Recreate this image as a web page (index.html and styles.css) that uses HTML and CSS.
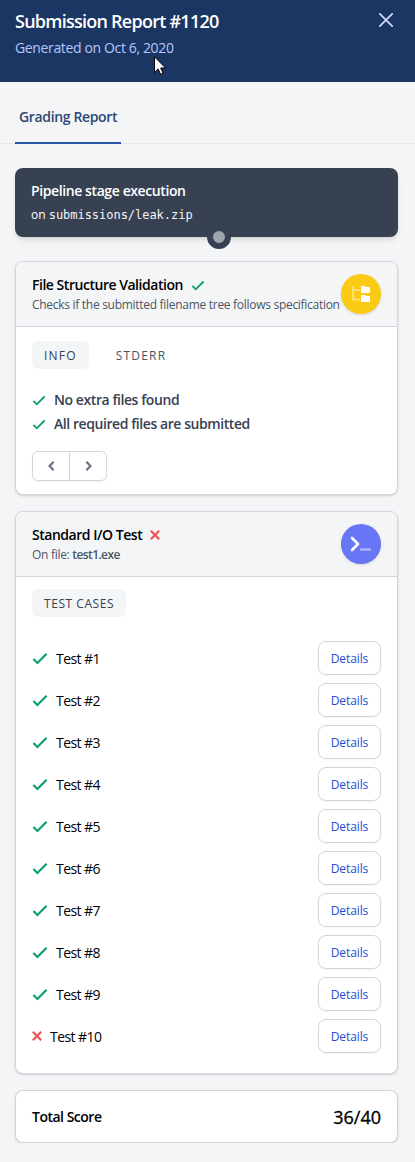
FILE: index.html
```html
<!DOCTYPE html>
<html lang="en">
<head>
<meta charset="utf-8">
<title>Submission Report #1120</title>
<link rel="stylesheet" href="styles.css">
</head>
<body>
<svg class="defs" width="0" height="0" aria-hidden="true">
  <symbol id="check" viewBox="0 0 16 13"><path d="M1.400 7l4 4L14.600 1.800" fill="none" stroke="currentColor" stroke-width="2.200"/></symbol>
  <symbol id="cross" viewBox="0 0 10 10"><path d="M.8.8l8.4 8.4M9.2.8L.8 9.2" fill="none" stroke="currentColor" stroke-width="2.200"/></symbol>
</svg>
<header class="header">
  <div>
    <h1 class="title"><span>Submission Report #1120</span></h1>
    <p class="generated"><span>Generated on Oct 6, 2020</span></p>
  </div>
  <svg class="close" viewBox="0 0 14 14"><path d="M.8.8l12.4 12.4M13.2.8L.8 13.2" fill="none" stroke="currentColor" stroke-width="1.8" stroke-linecap="round"/></svg>
  <svg class="cursor" viewBox="0 0 12 19"><path d="M.5.8v15.6l3.6-3.5 2.5 5.4 2.5-1.1-2.4-5.2h4.8z" fill="#fff" stroke="#000"/></svg>
</header>
<nav class="tabs"><a class="tab">Grading Report</a></nav>
<main class="content">
  <section class="stage">
    <h2 class="stage-title">Pipeline stage execution</h2>
    <p class="stage-file">on <code>submissions/leak.zip</code></p>
    <span class="dot"></span>
  </section>

  <section class="card">
    <div class="card-head">
      <div class="head-text">
        <h3 class="card-title"><span>File Structure Validation</span><svg class="ok ok-small"><use href="#check"/></svg></h3>
        <p class="sub">Checks if the submitted filename tree follows specification</p>
      </div>
      <span class="badge yellow"><svg width="20" height="18" viewBox="0 0 20 18"><path d="M2 1v13.500h7M2 5h7" fill="none" stroke="#fff" stroke-width="2" opacity=".4"/><path d="M11 1h3l1 1h3.300q.7 0 .7.7v4.600q0 .7-.7.7H10.700q-.7 0-.7-.7V1.700q0-.7.7-.7zM11 10h3l1 1h3.300q.7 0 .7.7v4.600q0 .7-.7.7H10.700q-.7 0-.7-.7v-5.600q0-.7.7-.7z" fill="#fff"/></svg></span>
    </div>
    <div class="card-body">
      <div class="pills"><span class="pill active">INFO</span><span class="pill">STDERR</span></div>
      <ul class="results">
        <li><svg class="ok ok-small"><use href="#check"/></svg><span>No extra files found</span></li>
        <li><svg class="ok ok-small"><use href="#check"/></svg><span>All required files are submitted</span></li>
      </ul>
      <div class="pager">
        <span><svg width="7" height="10" viewBox="0 0 7 10"><path d="M5.600 .8L1.600 5l4 4.200" fill="none" stroke="currentColor" stroke-width="2.200"/></svg></span>
        <span><svg width="7" height="10" viewBox="0 0 7 10"><path d="M1.400 .8L5.400 5l-4 4.200" fill="none" stroke="currentColor" stroke-width="2.200"/></svg></span>
      </div>
    </div>
  </section>

  <section class="card">
    <div class="card-head">
      <div class="head-text">
        <h3 class="card-title"><span>Standard I/O Test</span><svg class="bad bad-head"><use href="#cross"/></svg></h3>
        <p class="sub">On file: <b>test1.exe</b></p>
      </div>
      <span class="badge indigo"><svg width="22" height="16" viewBox="0 0 22 16"><path d="M2 2l6 6-6 6" fill="none" stroke="#fff" stroke-width="2.600" stroke-linecap="round" stroke-linejoin="round"/><path d="M10 13.500h11" stroke="#fff" stroke-width="2.400" opacity=".45"/></svg></span>
    </div>
    <div class="card-body cases-body">
      <div class="pills"><span class="pill active wide">TEST CASES</span></div>
      <ul class="cases">
        <li><svg class="ok"><use href="#check"/></svg><span>Test #1</span><a class="details">Details</a></li>
        <li><svg class="ok"><use href="#check"/></svg><span>Test #2</span><a class="details">Details</a></li>
        <li><svg class="ok"><use href="#check"/></svg><span>Test #3</span><a class="details">Details</a></li>
        <li><svg class="ok"><use href="#check"/></svg><span>Test #4</span><a class="details">Details</a></li>
        <li><svg class="ok"><use href="#check"/></svg><span>Test #5</span><a class="details">Details</a></li>
        <li><svg class="ok"><use href="#check"/></svg><span>Test #6</span><a class="details">Details</a></li>
        <li><svg class="ok"><use href="#check"/></svg><span>Test #7</span><a class="details">Details</a></li>
        <li><svg class="ok"><use href="#check"/></svg><span>Test #8</span><a class="details">Details</a></li>
        <li><svg class="ok"><use href="#check"/></svg><span>Test #9</span><a class="details">Details</a></li>
        <li><svg class="bad"><use href="#cross"/></svg><span>Test #10</span><a class="details">Details</a></li>
      </ul>
    </div>
  </section>

  <section class="card total"><span class="total-label">Total Score</span><span class="score">36/40</span></section>
</main>
</body>
</html>
```
FILE: styles.css
```css
* { box-sizing: border-box; }
body, h1, h2, h3, p, ul { margin: 0; padding: 0; }
ul { list-style: none; }
svg { display: block; flex: none; }
.defs { position: absolute; }
body {
  background: #f4f5f7;
  color: #000;
  font-family: "Open Sans", "Noto Sans", sans-serif;
  font-size: 14px;
  line-height: 20px;
  white-space: nowrap;
}
.header {
  position: relative;
  display: flex;
  justify-content: space-between;
  height: 82px;
  padding: 7px 22px 0 15px;
  background: #1c3664;
}
.title { font-size: 18px; line-height: 28px; font-weight: 600; color: #fff; letter-spacing: -.75px; }
.generated { margin-top: 3px; color: #b4c6fc; letter-spacing: -.36px; }
.close { width: 14px; height: 14px; margin-top: 6px; color: #c9d8fb; }
.cursor { position: absolute; left: 154px; top: 56px; width: 12px; height: 19px; }

.tabs { height: 62px; padding-left: 15px; border-bottom: 1px solid #e5e7eb; display: flex; }
.tab {
  width: 106px;
  height: 62px;
  padding: 25px 4px 0;
  border-bottom: 2px solid #2857a8;
  color: #2c4775;
  font-weight: 600;
  letter-spacing: -.35px;
}
.content { display: flex; flex-direction: column; gap: 16px; padding: 24px 17px 0 15px; }

.stage {
  position: relative;
  height: 69px;
  margin-bottom: 8px;
  padding: 13px 16px 0;
  border-radius: 8px;
  background: #374151;
  color: #fff;
  box-shadow: 0 4px 6px -1px rgba(0,0,0,.1), 0 2px 4px -1px rgba(0,0,0,.06);
}
.stage-title { font-size: 14px; line-height: 20px; font-weight: 600; letter-spacing: -.4px; }
.stage-file { margin-top: 5px; font-size: 12px; line-height: 18px; }
.stage-file code { font-family: "DejaVu Sans Mono", monospace; font-size: 12px; color: #f4f5f7; letter-spacing: -.03px; }
.dot {
  position: absolute;
  left: 192px;
  top: 57px;
  width: 24px;
  height: 24px;
  border: 6px solid #374151;
  border-radius: 50%;
  background: #9fa6b2;
}

.card {
  border: 1px solid #d2d6dc;
  border-radius: 8px;
  background: #fff;
  box-shadow: 0 1px 3px rgba(0,0,0,.1), 0 1px 2px rgba(0,0,0,.06);
}
.card-head {
  display: flex;
  justify-content: space-between;
  height: 65px;
  padding: 12px 16px 0;
  border-bottom: 1px solid #d2d6dc;
  border-radius: 7px 7px 0 0;
  background: #f4f5f7;
}
.head-text { width: 0; padding-top: 1px; }
.card-title { display: flex; align-items: center; font-size: 14px; line-height: 20px; font-weight: 600; letter-spacing: -.47px; }
.sub { font-size: 12px; line-height: 18px; margin-top: 1px; color: #4b5563; letter-spacing: -.29px; }
.sub b { font-weight: 600; letter-spacing: -.6px; }
.ok { width: 16px; height: 13px; color: #0e9f6e; }
.ok-small { width: 14px; height: 11px; }
.card-title .ok-small { margin-left: 8px; }
.bad { width: 10px; height: 10px; color: #f05252; }
.bad-head { margin-left: 8px; }
.badge { display: flex; align-items: center; justify-content: center; width: 40px; height: 40px; border-radius: 50%; box-shadow: 0 1px 3px rgba(0,0,0,.12); }
.yellow { background: #faca15; }
.indigo { background: #6875f5; }

.card-body { padding: 14px 16px 13px; }
.pills { display: flex; gap: 15px; }
.pill { height: 28px; padding: 0 12px; border-radius: 6px; color: #4b5563; font-size: 12px; line-height: 29px; letter-spacing: 1.2px; }
.pill.active { background: #f4f5f7; color: #374151; }
.pill.wide { letter-spacing: .55px; }
.results { padding-top: 19px; }
.results li { display: flex; align-items: center; gap: 8px; height: 24px; color: #374151; font-weight: 600; letter-spacing: -.43px; }
.pager { display: flex; width: 75px; height: 30px; margin-top: 15px; border: 1px solid #d2d6dc; border-radius: 6px; color: #6b7280; box-shadow: 0 1px 2px rgba(0,0,0,.05); }
.pager span { flex: 1; display: flex; align-items: center; justify-content: center; }
.pager span + span { border-left: 1px solid #d2d6dc; }

.cases-body { padding: 12px 16px 20px; }
.cases { display: flex; flex-direction: column; gap: 8px; padding-top: 24px; }
.cases li { display: flex; align-items: center; gap: 8px; height: 34px; letter-spacing: -.55px; }
.cases li > span { padding-top: 2px; }
.details {
  width: 63px;
  height: 34px;
  margin-left: auto;
  border: 1px solid #d2d6dc;
  border-radius: 8px;
  color: #1c4ed8;
  font-size: 12px;
  line-height: 33px;
  text-align: center;
  letter-spacing: -.1px;
  box-shadow: 0 1px 2px rgba(0,0,0,.05);
}
.total { display: flex; align-items: center; justify-content: space-between; height: 53px; padding: 0 16px; }
.total-label { font-weight: 600; letter-spacing: -.5px; }
.score { font-size: 18px; -webkit-text-stroke: .3px #000; }
```
